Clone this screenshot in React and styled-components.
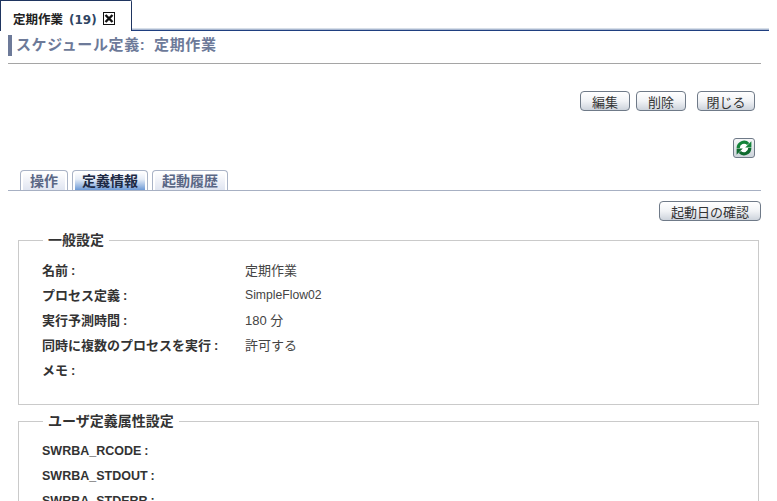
import React from "react";
import styled, { createGlobalStyle } from "styled-components";

const GlobalStyle = createGlobalStyle`
    html, body {
        margin: 0;
        padding: 0;
        background: #fff;
        overflow: hidden;
    }
    body {
        font-family: "Liberation Sans", "Noto Sans CJK JP", sans-serif;
        font-size: 13px;
        color: #333;
    }
`

const Page = styled.div`
    width: 769px;
    height: 501px;
    overflow: hidden;
`

const TopTabs = styled.div`
    height: 31px;
    display: flex;
    align-items: flex-end;
`

const TopTab = styled.div`
    width: 132px;
    height: 31px;
    box-sizing: border-box;
    background: #fff;
    border: 1px solid #1f3560;
    border-bottom: 0;
    border-top-right-radius: 2px;
    padding: 4px 0 0 12px;
    display: flex;
    align-items: center;
    gap: 6px;
    font-size: 12.5px;
    font-weight: bold;
    color: #222;
`

const TabLine = styled.div`
    flex: 1;
    height: 3px;
    background: linear-gradient(#d6dee8 0 33%, #a9b7d0 33% 66%, #1f3f80 66%);
`

const Count = styled.span`
    font-family: "DejaVu Sans", sans-serif;
    font-size: 12px;
    color: #2f4563;
    margin-left: 6px;
`

const Body = styled.div`
    padding: 0 8px;
`

const Heading = styled.h1`
    margin: 4px 0 0;
    height: 29px;
    box-sizing: border-box;
    border-bottom: 1px solid #a5a5a5;
    font-size: 15px;
    font-weight: bold;
    color: #6d7a99;
`

const HeadingText = styled.span`
    display: block;
    border-left: 4px solid #6d7a99;
    padding-left: 4px;
    height: 21px;
    line-height: 19px;
    letter-spacing: 0.6px;
    word-spacing: 4px;
`

const Actions = styled.div`
    display: flex;
    justify-content: flex-end;
    gap: 6px;
    margin-top: 27px;
    padding-right: 6px;
`

const Btn = styled.button`
    height: 20px;
    box-sizing: border-box;
    padding: 0;
    width: ${p => p.$w}px;
    margin-left: ${p => p.$ml || 0}px;
    font: 13px "Liberation Sans", "Noto Sans CJK JP", sans-serif;
    color: #333;
    border: 1px solid #6f7a88;
    border-radius: 4px;
    background: linear-gradient(#ffffff, #f1f3f6 50%, #cdd3dc);
`

const RefreshRow = styled.div`
    display: flex;
    justify-content: flex-end;
    margin-top: 27px;
    padding-right: 6px;
`

const RefreshBtn = styled.div`
    width: 22px;
    height: 20px;
    box-sizing: border-box;
    border: 1px solid #6f7a88;
    border-radius: 3px;
    background: linear-gradient(#f6f7f9, #ccd3da);
    display: flex;
    align-items: center;
    justify-content: center;
`

const SubTabs = styled.div`
    display: flex;
    gap: 4px;
    margin-top: 12px;
    padding-left: 12px;
    height: 21px;
    box-sizing: border-box;
    border-bottom: 1px solid #a7b0c3;
`

const SubTab = styled.div`
    width: ${p => p.$w}px;
    height: 20px;
    box-sizing: border-box;
    border: 1px solid #a9b3c6;
    border-bottom: 0;
    border-radius: 4px 4px 0 0;
    padding: 1px 2px 0;
    font-size: 14px;
    font-weight: bold;
    color: ${p => (p.$active ? "#1d2a44" : "#5a6785")};
`

const SubTabFace = styled.div`
    height: 100%;
    text-align: center;
    line-height: 18px;
    background: ${p => (p.$active
        ? "linear-gradient(#ffffff, #e6edf7 40%, #6d9ad6)"
        : "linear-gradient(#ffffff, #e0e5f1)")};
`

const ConfirmRow = styled.div`
    display: flex;
    justify-content: flex-end;
    margin-top: 10px;
`

const Group = styled.fieldset`
    margin: ${p => p.$mt}px 2px 0 10px;
    padding: 9px 0 0 23px;
    height: ${p => p.$h}px;
    box-sizing: border-box;
    border: 1px solid #cacaca;
`

const GroupTitle = styled.legend`
    margin-left: 1px;
    padding: 0 5px;
    font-size: 14px;
    font-weight: bold;
    color: #333;
    line-height: 16px;
`

const Row = styled.div`
    display: flex;
    height: 25px;
    align-items: center;
`

const Label = styled.div`
    width: 203px;
    font-size: ${p => (p.$latin ? 12.5 : 13)}px;
    font-weight: bold;
    color: #333;
`

const Colon = styled.span`
    margin-left: 3px;
`

const Value = styled.div`
    font-size: ${p => (p.$latin ? 12.2 : 13)}px;
    color: #444;
`

// circular arrows of the reload button
const Refresh = () => (
    <svg width="18" height="18" viewBox="0 0 18 18">
        <circle cx="9" cy="9" r="5" fill="#fff" />
        <path d="M3.2 9A5.8 5.8 0 0 1 13.2 5" fill="none" stroke="#14843a" strokeWidth="3.2" />
        <polygon points="10.2,8.4 16.4,8.4 16.4,2.2" fill="#14843a" />
        <path d="M14.8 9A5.8 5.8 0 0 1 4.8 13" fill="none" stroke="#0e6a2e" strokeWidth="3.2" />
        <polygon points="7.8,9.6 1.6,9.6 1.6,15.8" fill="#0e6a2e" />
    </svg>
)

const CloseBox = () => (
    <svg width="12" height="13" viewBox="0 0 12 13">
        <rect x="0.5" y="0.5" width="11" height="12" fill="#fff" stroke="#111" />
        <path d="M2.5 3l7 7M9.5 3l-7 7" stroke="#111" strokeWidth="2.4" />
    </svg>
)

const general = [
    ["名前", "定期作業"],
    ["プロセス定義", "SimpleFlow02", true],
    ["実行予測時間", "180 分"],
    ["同時に複数のプロセスを実行", "許可する"],
    ["メモ", ""],
]

const attrs = ["SWRBA_RCODE", "SWRBA_STDOUT", "SWRBA_STDERR"]

const App = () => {
    return (
        <Page>
            <GlobalStyle />
            <TopTabs>
                <TopTab>
                    <span>定期作業<Count>(19)</Count></span>
                    <CloseBox />
                </TopTab>
                <TabLine />
            </TopTabs>
            <Body>
                <Heading>
                    <HeadingText>スケジュール定義: 定期作業</HeadingText>
                </Heading>
                <Actions>
                    <Btn $w={50}>編集</Btn>
                    <Btn $w={50}>削除</Btn>
                    <Btn $w={58} $ml={5}>閉じる</Btn>
                </Actions>
                <RefreshRow>
                    <RefreshBtn><Refresh /></RefreshBtn>
                </RefreshRow>
                <SubTabs>
                    <SubTab $w={48}><SubTabFace>操作</SubTabFace></SubTab>
                    <SubTab $w={76} $active><SubTabFace $active>定義情報</SubTabFace></SubTab>
                    <SubTab $w={76}><SubTabFace>起動履歴</SubTabFace></SubTab>
                </SubTabs>
                <ConfirmRow>
                    <Btn $w={102}>起動日の確認</Btn>
                </ConfirmRow>
                <Group $mt={11} $h={173}>
                    <GroupTitle>一般設定</GroupTitle>
                    {general.map(([k, v, latin]) => (
                        <Row key={k}>
                            <Label>{k}<Colon>:</Colon></Label>
                            <Value $latin={latin}>{v}</Value>
                        </Row>
                    ))}
                </Group>
                <Group $mt={8} $h={120}>
                    <GroupTitle>ユーザ定義属性設定</GroupTitle>
                    {attrs.map(k => (
                        <Row key={k}>
                            <Label $latin>{k}<Colon>:</Colon></Label>
                        </Row>
                    ))}
                </Group>
            </Body>
        </Page>
    )
}

export default App;
